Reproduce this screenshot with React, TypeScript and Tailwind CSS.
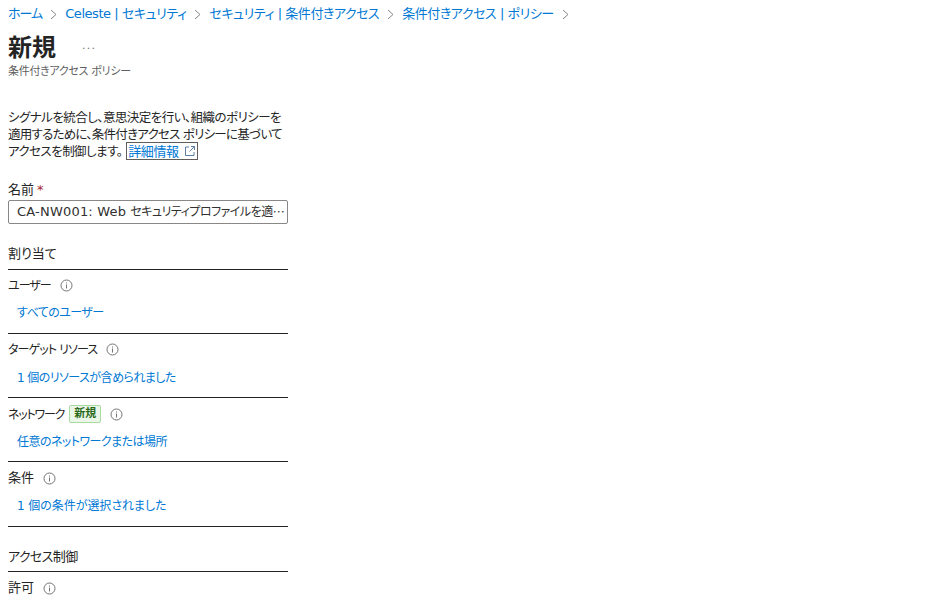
import React from 'react';

const font = "font-['DejaVu_Sans','Noto_Sans_CJK_JP',sans-serif] [font-feature-settings:'palt']";

const Info = () => (
  <svg width="13" height="13" viewBox="0 0 13 13" fill="none" className="shrink-0">
    <circle cx="6.5" cy="6.5" r="5.5" stroke="#737373" strokeWidth="1" />
    <rect x="6" y="5.5" width="1" height="4" fill="#737373" />
    <rect x="6" y="3.5" width="1" height="1" fill="#737373" />
  </svg>
);

const Chevron = () => (
  <svg width="7" height="11" viewBox="0 0 7 11" fill="none" className="shrink-0">
    <path d="M1 1l5 4.5L1 10" stroke="#8a8886" strokeWidth="1" />
  </svg>
);

const crumbs = ['ホーム', 'Celeste | セキュリティ', 'セキュリティ | 条件付きアクセス', '条件付きアクセス | ポリシー'];

type RowProps = {
  label: string;
  value: string;
  badge?: boolean;
  labelClass?: string;
  valueClass?: string;
  rowClass?: string;
};

const Row = ({ label, value, badge, labelClass, valueClass, rowClass }: RowProps) => (
  <div className={`border-b border-[#242424] w-[280px] ${rowClass ?? 'h-[64px]'}`}>
    <div className="flex items-center h-[30px] text-[#242424]">
      <span className={labelClass ?? 'pt-[2px] text-[12px] tracking-[-1px]'}>{label}</span>
      {badge && (
        <span className="ml-[5px] w-[32px] h-[18px] flex items-center justify-center rounded-[2px] border border-[#a9dba0] bg-[#eaf6e8] text-[#2c6a1a] text-[11px] font-bold">
          新規
        </span>
      )}
      <span className="ml-[9px]"><Info /></span>
    </div>
    <div className={`pl-[9px] mt-[1px] h-[24px] flex items-center text-[#0078d4] text-[12px] ${valueClass ?? 'tracking-[-0.55px]'}`}>{value}</div>
  </div>
);

export default function App() {
  return (
    <div className={`${font} w-[926px] h-[599px] overflow-hidden bg-white text-[13px] leading-[18px] pl-2`}>
      <nav className="flex items-center gap-[8px] h-[28px] text-[#0078d4] tracking-[-0.45px]">
        {crumbs.map((c, i) => (
          <React.Fragment key={c}>
            <span className={i === 0 ? 'whitespace-pre tracking-[-1px]' : 'whitespace-pre'}>{c}</span>
            <Chevron />
          </React.Fragment>
        ))}
      </nav>
      <div className="flex items-center h-[38px] pt-[1px]">
        <h1 className="text-[24px] font-bold text-[#242424] leading-none">新規</h1>
        <span className="ml-[26px] mb-[4px] text-[#737373] text-[11px] tracking-[1.2px] leading-none">...</span>
      </div>
      <div className="text-[11px] text-[#5f5f5f] h-[16px] leading-[12px] tracking-[-0.3px]">条件付きアクセス ポリシー</div>

      <p className="mt-[27px] w-[280px] h-[52px] text-[#242424] text-[12.5px] leading-[17px] tracking-[-0.55px] whitespace-nowrap">
        シグナルを統合し、意思決定を行い、組織のポリシーを<br />
        <span className="tracking-[-0.75px]">適用するために、条件付きアクセス ポリシーに基づいて</span><br />
        アクセスを制御します。
        <span className="inline-flex items-center h-[18px] -mt-[1px] ml-[4px] pl-[1px] pr-[1px] border border-[#605e5c] text-[#0078d4] text-[13px] tracking-[-0.4px] align-top">
          詳細情報
          <svg width="12" height="12" viewBox="0 0 12 12" fill="none" className="ml-[5px]">
            <path d="M5 2H1.5v8.5H10V7M7 1.5h3.5V5M10.5 1.5L5.5 6.5" stroke="#5b7fa6" strokeWidth="1" />
          </svg>
        </span>
      </p>

      <div className="mt-[19px] h-[20px] text-[#242424] flex items-center">
        名前<span className="ml-[3px] text-[#a4262c]">*</span>
      </div>
      <div className="w-[280px] h-[24px] border border-[#8a8886] rounded-[2px] pl-[8px] flex items-center text-[#323130] whitespace-nowrap overflow-hidden">
        <span className="tracking-[0.2px]">CA-NW001: Web</span>
        <span className="ml-[4px] text-[12px] tracking-[-0.5px]">セキュリティプロファイルを適</span>
        <span className="font-['Noto_Sans_CJK_JP',sans-serif] text-[12px]" lang="ja">…</span>
      </div>

      <div className="mt-[19px] pt-[1px] w-[280px] h-[27px] border-b border-[#242424] text-[#242424] leading-[20px]">割り当て</div>
      <Row label="ユーザー" value="すべてのユーザー" />
      <Row label="ターゲット リソース" labelClass="pt-[2px] text-[12px] tracking-[-0.9px]" value="1 個のリソースが含められました" valueClass="tracking-[-0.55px] pt-[2px]" />
      <Row label="ネットワーク" labelClass="pt-[2px] text-[12px] tracking-[-1.2px]" value="任意のネットワークまたは場所" badge rowClass="h-[64px] pt-[1px]" />
      <Row label="条件" labelClass="text-[13px]" value="1 個の条件が選択されました" valueClass="tracking-[-0.05px]" rowClass="h-[65px] pt-[1px]" />

      <div className="mt-[20px] w-[280px] h-[25px] border-b border-[#242424] text-[#242424] leading-[20px] tracking-[-0.6px]">アクセス制御</div>
      <div className="flex items-center h-[32px] text-[#242424]">
        許可<span className="ml-[9px]"><Info /></span>
      </div>
    </div>
  );
}
